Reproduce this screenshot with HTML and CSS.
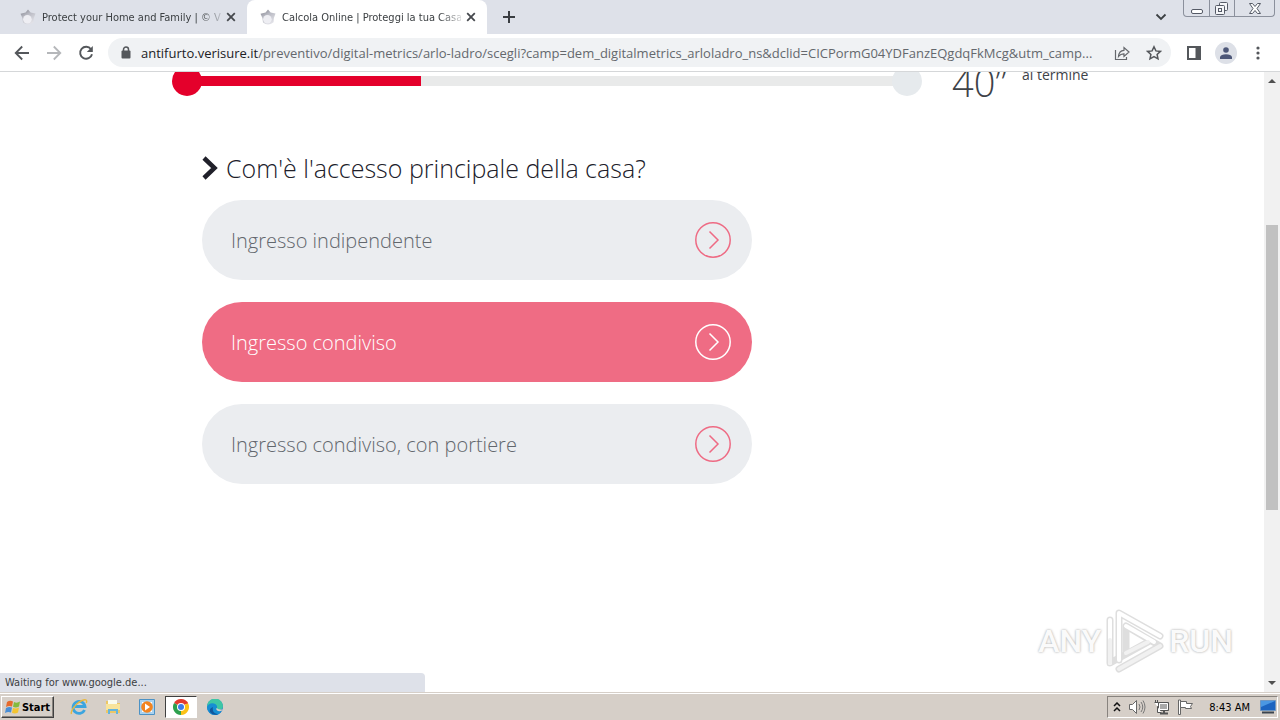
FILE: index.html
```html
<!DOCTYPE html>
<html lang="it">
<head>
<meta charset="utf-8">
<title>Calcola Online | Proteggi la tua Casa</title>
<link rel="stylesheet" href="styles.css">
</head>
<body>
<svg class="defs" aria-hidden="true">
  <defs>
    <linearGradient id="pearl" x1="0" y1="0" x2="0.6" y2="1"><stop offset="0" stop-color="#7d7e88"/><stop offset="0.45" stop-color="#b9bac3"/><stop offset="1" stop-color="#e2e2e8"/></linearGradient>
    <symbol id="favicon" viewBox="0 0 16 16"><path d="M8 0.5 10.6 3.4 15.500 4.6 13.900 9 13.6 13.2Q8 17.5 3 13.4L2.4 9 0.500 4.8 5.6 3.4Z" fill="url(#pearl)"/><circle cx="7.400" cy="10.200" r="4.300" fill="#eeeef3"/></symbol>
    <symbol id="close" viewBox="0 0 10 10"><path d="M1.2 1.2 8.8 8.8M8.8 1.2 1.2 8.8" stroke="#45484d" stroke-width="1.8"/></symbol>
    <symbol id="go" viewBox="0 0 36 36"><circle cx="18" cy="18" r="17.2" fill="none" stroke="currentColor" stroke-width="1.5"/><path d="M14.5 9.5 23 18l-8.500 8.500" fill="none" stroke="currentColor" stroke-width="1.5"/></symbol>
  </defs>
</svg>

<header class="tabstrip">
  <div class="tab">
    <svg class="favicon"><use href="#favicon"/></svg>
    <span class="tab-title">Protect your Home and Family | © V</span>
    <button class="tab-close" aria-label="Close tab"><svg><use href="#close"/></svg></button>
  </div>
  <div class="tab tab-active">
    <svg class="favicon"><use href="#favicon"/></svg>
    <span class="tab-title">Calcola Online | Proteggi la tua Casa</span>
    <button class="tab-close" aria-label="Close tab"><svg><use href="#close"/></svg></button>
  </div>
  <button class="new-tab" aria-label="New tab"><svg width="12" height="12" viewBox="0 0 12 12"><path d="M6 0v12M0 6h12" stroke="#3a3d42" stroke-width="2"/></svg></button>
  <button class="tab-search" aria-label="Search tabs"><svg width="12" height="8" viewBox="0 0 12 8"><path d="M1.500 1.500 6 6l4.500-4.500" fill="none" stroke="#3c4043" stroke-width="1.800"/></svg></button>
  <div class="window-controls">
    <button aria-label="Minimize"><svg width="12" height="13" viewBox="0 0 12 13"><rect x="0.500" y="7.500" width="11" height="4" rx="1.500" fill="#fff" stroke="#555a66"/></svg></button>
    <button aria-label="Restore"><svg width="14" height="13" viewBox="0 0 14 13"><g fill="#f4f5f8" stroke="#555a66"><rect x="4.500" y="0.500" width="8" height="8" rx="1"/><rect x="0.500" y="3.500" width="9" height="9" rx="1"/><rect x="3.500" y="6.500" width="3" height="3"/></g></svg></button>
    <button class="wide" aria-label="Close"><svg width="12" height="11" viewBox="0 0 12 11"><path d="M0.500 0.500h3L6 3.500l2.500-3h3L8 5.500l3.500 5h-3L6 7.500l-2.500 3h-3L4 5.500Z" fill="#fff" stroke="#555a66"/></svg></button>
  </div>
</header>

<nav class="toolbar">
  <button aria-label="Back"><svg width="16" height="16" viewBox="0 0 16 16"><path d="M15 8H2M8.200 1.500 1.700 8l6.500 6.500" fill="none" stroke="#54575b" stroke-width="1.800"/></svg></button>
  <button aria-label="Forward"><svg width="16" height="16" viewBox="0 0 16 16"><path d="M1 8h13M7.800 1.500 14.300 8l-6.500 6.500" fill="none" stroke="#b5b7ba" stroke-width="1.800"/></svg></button>
  <button aria-label="Reload"><svg width="16" height="16" viewBox="0 0 16 16"><path d="M13 4.200A6 6 0 1 0 14 9.200" fill="none" stroke="#54575b" stroke-width="1.900"/><path d="M14.800 1v6H8.800Z" fill="#54575b"/></svg></button>
  <div class="omnibox">
    <svg width="10" height="13" viewBox="0 0 10 13"><path d="M2.500 5V3.500a2.500 2.500 0 0 1 5 0V5" fill="none" stroke="#54575b" stroke-width="1.500"/><rect x="0.500" y="4.500" width="9" height="8" rx="1" fill="#54575b"/></svg>
    <div class="url"><span class="host">antifurto.verisure.it</span>/preventivo/digital-metrics/arlo-ladro/scegli?camp=dem_digitalmetrics_arloladro_ns&amp;dclid=CICPormG04YDFanzEQgdqFkMcg&amp;utm_camp...</div>
    <button aria-label="Share"><svg width="16" height="16" viewBox="0 0 16 16"><path d="M1.500 5v9.500h11V12M4.500 11.500C4.800 7.500 7 5.500 10 5.300V2.500L15 7l-5 4.500V8.800C7.500 8.700 6 9.500 4.500 11.500Z" fill="none" stroke="#64676b" stroke-width="1.200"/></svg></button>
    <button aria-label="Bookmark"><svg width="16" height="16" viewBox="0 0 16 16"><path d="m8 1.800 1.900 4.100 4.500.5-3.300 3 .9 4.400L8 11.600l-4 2.200.9-4.400-3.300-3 4.500-.5Z" fill="none" stroke="#54575b" stroke-width="1.500"/></svg></button>
  </div>
  <button aria-label="Side panel"><svg width="14" height="14" viewBox="0 0 14 14"><path d="M1 1h12v12H1Z" fill="none" stroke="#54575b" stroke-width="2"/><path d="M8.500 0H14v14H8.500Z" fill="#54575b"/></svg></button>
  <button class="profile" aria-label="Profile"><svg width="12" height="12" viewBox="0 0 12 12"><circle cx="6" cy="3" r="2.800" fill="#4d5778"/><path d="M0 12V10Q1 7.300 6 7.200 11 7.300 12 10v2Z" fill="#4d5778"/></svg></button>
  <button class="menu" aria-label="Menu"><svg width="4" height="14" viewBox="0 0 4 14"><g fill="#54575b"><circle cx="2" cy="2" r="1.600"/><circle cx="2" cy="7" r="1.600"/><circle cx="2" cy="12" r="1.600"/></g></svg></button>
</nav>

<div class="viewport">
  <main class="page">
    <section class="status">
      <div class="progress" role="progressbar" aria-label="Avanzamento" aria-valuenow="32">
        <span class="dot dot-done"></span>
        <span class="track"><span class="fill" style="width:32%"></span></span>
        <span class="dot"></span>
      </div>
      <div class="seconds">40”</div>
      <div class="remaining">al termine</div>
    </section>
    <section class="question">
      <h1><svg width="16" height="24" viewBox="0 0 16 24"><path d="M2 2 12.500 12 2 22" fill="none" stroke="#20202a" stroke-width="4.500"/></svg>Com'è l'accesso principale della casa?</h1>
      <div class="options">
        <button class="option">Ingresso indipendente<svg><use href="#go"/></svg></button>
        <button class="option option-hover">Ingresso condiviso<svg><use href="#go"/></svg></button>
        <button class="option">Ingresso condiviso, con portiere<svg><use href="#go"/></svg></button>
      </div>
    </section>
  </main>
  <div class="scrollbar">
    <svg width="8" height="4" viewBox="0 0 8 4"><path d="M0 4 4 0l4 4Z" fill="#505050"/></svg>
    <div class="rail"><div class="thumb"></div></div>
    <svg width="8" height="4" viewBox="0 0 8 4"><path d="M0 0 4 4l4-4Z" fill="#505050"/></svg>
  </div>
  <div class="load-status">Waiting for www.google.de...</div>
  <div class="watermark">
    <span>ANY</span>
    <svg width="60" height="66" viewBox="0 0 60 66"><g fill="none" stroke-linejoin="round" stroke-linecap="round"><g stroke="#dedede" stroke-width="7"><path d="M14 52V5L55 28"/><path d="M5 12V55L43 34"/><path d="M14 61 55 38 21 18V43"/></g><g stroke="#fff" stroke-width="4"><path d="M14 52V5L55 28"/><path d="M5 12V55"/><path d="M21 18 49 34"/></g><g stroke="#f1f1f1" stroke-width="4"><path d="M5 55V32M14 61 55 38M21 45 43 34"/></g></g></svg>
    <span>RUN</span>
  </div>
</div>

<footer class="taskbar">
  <button class="start"><svg width="16" height="16" viewBox="0 0 16 16"><path d="M2 3Q5 1 8 2.500L7 7.500Q4 6.200 1 8Z" fill="#e66a2c"/><path d="M9 3Q12 4.500 15 2.500L14 7.500Q11 9.200 8 7.800Z" fill="#84ba3d"/><path d="M1 9Q4 7.300 7 8.500L6 13.500Q3 12.300 0 14Z" fill="#498ed6"/><path d="M8 9Q11 10.200 14 8.500L13 13.500Q10 15.200 7 13.800Z" fill="#f3c431"/></svg>Start</button>
  <div class="launchers">
    <button aria-label="Internet Explorer"><svg width="18" height="18" viewBox="0 0 18 18"><path d="M14.500 12A6 6 0 1 1 15 8.500H5" fill="none" stroke="#3ca5df" stroke-width="2.800"/><path d="M1.500 16C0 13 6 5 12 2.500 16 .8 17.500 2 16.200 5" fill="none" stroke="#e9b83c" stroke-width="1.400"/></svg></button>
    <button aria-label="Explorer"><svg width="16" height="16" viewBox="0 0 16 16"><path d="M1 2h5l1 2h8v10H1Z" fill="#ecc765"/><path d="M3 1h9v5H3Z" fill="#f9fbee"/><path d="M1 5h14v6H1Z" fill="#f8e49b"/><path d="M3 15v-5h10v5h-2v-3H5v3Z" fill="#65b5dc"/></svg></button>
    <button aria-label="Media Player"><svg width="16" height="16" viewBox="0 0 16 16"><path d="M.5.500h15v15H.5Z" fill="#a9d2ef" stroke="#4c92c5"/><path d="M3 3h10v10H3Z" fill="#fff"/><circle cx="8" cy="8" r="5.800" fill="#f28420"/><path d="m6 4.500 5 3.500-5 3.500Z" fill="#fff"/></svg></button>
    <button class="running" aria-label="Chrome"><svg width="16" height="16" viewBox="0 0 16 16"><path d="M8 8 1.070 4A8 8 0 0 1 14.930 4Z" fill="#e33b2e"/><path d="M8 8 14.930 4A8 8 0 0 1 8 16Z" fill="#fbc116"/><path d="M8 8V16A8 8 0 0 1 1.070 4Z" fill="#2da04e"/><path d="M8 4h6.930" stroke="#e33b2e"/><circle cx="8" cy="8" r="4" fill="#fff"/><circle cx="8" cy="8" r="3" fill="#3c7cea"/></svg></button>
    <button aria-label="Edge"><svg width="16" height="16" viewBox="0 0 16 16"><circle cx="8" cy="8" r="8" fill="#1c78c8"/><path d="M0 8A8 8 0 0 1 16 7Q16 11 11 11 8.500 10.500 10 8.500 10 5.500 6 5.200 2 5 0 8Z" fill="#3ec6a5"/><path d="M0 8Q2 3.500 7 4.500 11 6 9.500 9 8 11.500 12 12.300q2 .2 3-.8Q12 16 8 16A8 8 0 0 1 0 8Z" fill="#168ed3"/><path d="M6 8Q4.500 14 11 15.300 6 17 3 13 2 9.500 6 8Z" fill="#12579d"/><path d="M9.500 9Q8.500 11.500 12 12.300q3 .2 4-2.300-3 1.500-6.500-1Z" fill="#d8d1ca"/></svg></button>
  </div>
  <div class="tray">
    <svg width="8" height="10" viewBox="0 0 8 10"><path d="m1 4 3-3 3 3M1 9l3-3 3 3" fill="none" stroke="#111" stroke-width="1.500"/></svg>
    <svg width="18" height="16" viewBox="0 0 18 16"><path d="M1.500 5.500h3l4-4v13l-4-4h-3Z" fill="#fff" stroke="#686868"/><path d="M11 5q2 3 0 6M13 3q3.500 5 0 10M15 1.500q4 6.500 0 13" fill="none" stroke="#777"/></svg>
    <svg width="17" height="16" viewBox="0 0 17 16"><path d="M5.500 3.500h10v8h-10Z" fill="#a9a9a9" stroke="#555"/><path d="M6.500 4.500h8v6h-8Z" fill="none" stroke="#fff"/><path d="M7 14.500h8M11 12v2" stroke="#555" stroke-width="2"/><path d="M1.500 3.500h4v3l-1 1v6h4" fill="#fff" stroke="#555"/><path d="M2.500 1v2M4.500 1v2" stroke="#555"/></svg>
    <svg width="17" height="16" viewBox="0 0 17 16"><path d="M1.500 1v14.500h2V1Z" fill="#fff" stroke="#666"/><path d="M3.500 2.500h6v2h6l-2 3 1 2H8.500v-1h-5Z" fill="#fff" stroke="#666"/></svg>
    <time>8:43 AM</time>
    <svg width="16" height="14" viewBox="0 0 16 14"><path d="M.5.500h15v10H.5Z" fill="#1d64c0" stroke="#6f96c1"/><path d="M1 1h14L1 7Z" fill="#4b97e2"/><path d="M2 12.500h12" stroke="#3b444f" stroke-width="2"/></svg>
  </div>
</footer>
</body>
</html>
```
FILE: styles.css
```css
* { box-sizing: border-box; }

body {
  margin: 0;
  height: 100vh;
  display: flex;
  flex-direction: column;
  overflow: hidden;
  background: #fff;
  font-family: "Open Sans", "Noto Sans", sans-serif;
}

button {
  display: flex;
  align-items: center;
  justify-content: center;
  margin: 0;
  padding: 0;
  border: 0;
  background: none;
  font: inherit;
  color: inherit;
}

svg { display: block; flex: none; }
.defs { position: absolute; width: 0; height: 0; }

/* Tab strip */
.tabstrip {
  flex: none;
  display: flex;
  height: 34px;
  padding: 0 5px 0 7px;
  background: #dee1e9;
}
.tab {
  display: flex;
  align-items: center;
  width: 240px;
  padding: 0 11px 0 13px;
  font: 11px "DejaVu Sans Condensed", "DejaVu Sans", sans-serif;
  color: #3c4043;
}
.tab-active {
  background: #fff;
  border-radius: 8px 8px 0 0;
}
.favicon { width: 16px; height: 16px; margin-right: 6px; }
.tab-title {
  flex: 1;
  overflow: hidden;
  white-space: nowrap;
  mask-image: linear-gradient(90deg, #000 88%, rgba(0, 0, 0, 0.2));
}
.tab-close { width: 10px; height: 10px; margin-left: 5px; }
.tab-close svg { width: 10px; height: 10px; }
.new-tab { width: 28px; margin-left: 8px; }
.tab-search { width: 28px; margin-left: auto; }
.window-controls {
  display: flex;
  height: 17px;
  margin-left: 8px;
  border: 1px solid #8b909c;
  border-top: 0;
  border-radius: 0 0 4px 4px;
}
.window-controls button { width: 25px; }
.window-controls button + button { border-left: 1px solid #8b909c; }
.window-controls .wide { width: 40px; }

/* Toolbar */
.toolbar {
  flex: none;
  display: flex;
  align-items: center;
  gap: 16px;
  height: 38px;
  padding: 0 20px 0 14px;
  border-bottom: 1px solid #d5d7d9;
}
.omnibox {
  flex: 1;
  min-width: 0;
  display: flex;
  align-items: center;
  gap: 16px;
  height: 29px;
  margin: 0 0 0 -2px;
  padding: 0 9px 0 13px;
  border-radius: 15px;
  background: #f0f2f4;
}
.url {
  flex: 1;
  min-width: 0;
  margin-left: -6px;
  overflow: hidden;
  white-space: nowrap;
  font-size: 13px;
  color: #64686d;
}
.host { color: #202124; }
.profile {
  width: 22px;
  height: 22px;
  margin: 0 -2px;
  border-radius: 50%;
  background: #dde0e7;
}
.menu { margin-left: 5px; }

/* Page area */
.viewport {
  position: relative;
  flex: 1;
  min-height: 0;
  display: flex;
  overflow: hidden;
}
.page {
  flex: 1;
  margin-top: -16px;
  padding-left: 172px;
}
.status {
  display: flex;
  align-items: center;
  height: 50px;
  color: #3d4248;
}
.progress { display: flex; align-items: center; width: 750px; }
.dot {
  width: 30px;
  height: 30px;
  border-radius: 50%;
  background: #e6eaed;
}
.dot-done { background: #e4002b; }
.track {
  flex: 1;
  height: 10px;
  margin: 0 -4px;
  background: #e9eaea;
}
.fill { display: block; height: 100%; background: #e4002b; }
.seconds { width: 70px; margin-left: 30px; padding-top: 2px; font-size: 38px; font-weight: 300; line-height: 50px; }
.remaining { align-self: flex-start; padding-top: 9px; font-size: 14px; line-height: 20px; }

.question { width: 580px; padding: 40px 0 0 30px; }
h1 {
  display: flex;
  align-items: center;
  gap: 8px;
  margin: 0 0 10px;
  font-size: 25px;
  font-weight: 300;
  line-height: 44px;
  white-space: nowrap;
  color: #20202a;
}
.options { display: flex; flex-direction: column; gap: 22px; }
.option {
  justify-content: space-between;
  height: 80px;
  padding: 0 21px 0 29px;
  border-radius: 40px;
  background: #ebedf0;
  font-size: 20px;
  font-weight: 300;
  color: #62676d;
}
.option svg { width: 36px; height: 36px; color: #ee6b84; }
.option-hover { background: #ef6c84; color: #fff; }
.option-hover svg { color: #fff; }

.scrollbar {
  flex: none;
  display: flex;
  flex-direction: column;
  align-items: center;
  width: 16px;
  padding: 7px 0;
  background: #f1f1f1;
}
.rail { flex: 1; width: 12px; padding-top: 142px; }
.thumb { height: 285px; background: #c1c1c1; }

.load-status {
  position: absolute;
  left: 0;
  bottom: 0;
  width: 425px;
  padding: 0 5px;
  border-radius: 0 4px 0 0;
  background: #dee1e9;
  font: 11px/19px "DejaVu Sans Condensed", "DejaVu Sans", sans-serif;
  color: #3c4043;
}
.watermark {
  position: absolute;
  right: 47px;
  bottom: 18px;
  display: flex;
  align-items: center;
  gap: 4px;
  font: 500 32px Roboto, "Liberation Sans", sans-serif;
  color: #fafafa;
  text-shadow: 0 0 2px #bbb, 0 0 3px #ccc;
}

/* Taskbar */
.taskbar {
  flex: none;
  display: flex;
  align-items: center;
  height: 28px;
  padding: 1px 2px 0 1px;
  border-top: 1px solid #d6cfc8;
  background: #d6cfc8;
  box-shadow: inset 0 1px #fff;
}
.start {
  gap: 1px;
  width: 53px;
  height: 22px;
  border: 1px solid;
  border-color: #fff #404040 #404040 #fff;
  box-shadow: inset -1px -1px #88837e;
  font: bold 11px "DejaVu Sans Condensed", "DejaVu Sans", sans-serif;
  color: #000;
}
.launchers { display: flex; gap: 2px; margin-left: 9px; }
.launchers button { width: 32px; height: 22px; }
.launchers .running {
  border: 1px solid;
  border-color: #404040 #fff #fff #404040;
  background: #fff;
}
.tray {
  display: flex;
  align-items: center;
  gap: 7px;
  height: 22px;
  margin-left: auto;
  padding: 0 1px 0 5px;
  border: 1px solid;
  border-color: #88837e #fff #fff #88837e;
  font: 11px "DejaVu Sans Condensed", "DejaVu Sans", sans-serif;
  color: #000;
}
.tray time { margin: 0 3px 0 8px; }
```
